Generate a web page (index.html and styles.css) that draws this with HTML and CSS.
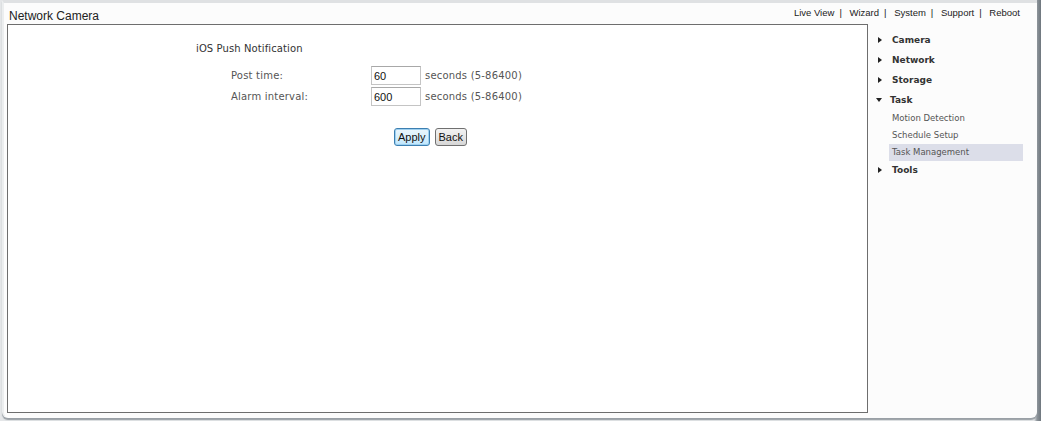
FILE: index.html
```html
<!DOCTYPE html>
<html lang="en">

<head>
  <meta charset="UTF-8" />
  <title>Network Camera</title>
  <link rel="stylesheet" href="styles.css">
</head>

<body>
  <div class="frame">
    <header class="topbar">
      <div class="brand">Network Camera</div>
      <nav class="links">
        <a href="#">Live View</a><span class="sep">|</span>
        <a href="#">Wizard</a><span class="sep">|</span>
        <a href="#">System</a><span class="sep">|</span>
        <a href="#">Support</a><span class="sep">|</span>
        <a href="#">Reboot</a>
      </nav>
    </header>
    <div class="body">
      <main class="panel">
        <div class="title">iOS Push Notification</div>
        <div class="form">
          <label class="label" for="post">Post time:</label>
          <input id="post" class="num" type="text" value="60" />
          <span class="hint">seconds (5-86400)</span>
          <label class="label" for="alarm">Alarm interval:</label>
          <input id="alarm" class="num" type="text" value="600" />
          <span class="hint">seconds (5-86400)</span>
        </div>
        <div class="actions">
          <button class="btn focus">Apply</button>
          <button class="btn">Back</button>
        </div>
      </main>
      <aside class="menu">
        <div class="item"><span class="arrow"></span>Camera</div>
        <div class="item"><span class="arrow"></span>Network</div>
        <div class="item"><span class="arrow"></span>Storage</div>
        <div class="item open"><span class="arrow down"></span>Task</div>
        <div class="sub">Motion Detection</div>
        <div class="sub">Schedule Setup</div>
        <div class="sub active">Task Management</div>
        <div class="item tools"><span class="arrow"></span>Tools</div>
      </aside>
    </div>
  </div>
</body>

</html>
```

FILE: styles.css
```css
:root {
  /* text */
  --text-color: #333;
  --sub-color: #555;
  /* frame */
  --frame-bg: #fcfcfc;
  --edge-color: #dfe1e3;
  /* box */
  --box-border: #6e6e6e;
  --active-bg: #dcdee9;
}

html,
body {
  margin: 0;
  width: 1041px;
  height: 421px;
  overflow: hidden;
}

body {
  background: linear-gradient(to right, #e4e6e8 0, #e4e6e8 1034px, #8d949a 1037px, #6f777e 1041px);
}

.frame {
  box-sizing: border-box;
  width: 1035px;
  height: 418px;
  margin: 0 0 0 2px;
  background-color: var(--frame-bg);
  border-radius: 0 0 6px 6px;
  border-left: 2px solid #eceeef;
  border-top: 3px solid var(--edge-color);
  box-shadow: 0 2px 1px #9aa0a6;
  display: flex;
  flex-direction: column;
}

/* header */
.topbar {
  height: 21px;
  display: flex;
  justify-content: space-between;
  align-items: flex-start;
  font-family: "Liberation Sans", Arial, sans-serif;
  color: #222;
}

.brand {
  font-size: 12px;
  margin: 6px 0 0 5px;
}

.links {
  font-size: 9.5px;
  margin: 4px 17px 0 0;
}

.links a {
  color: #222;
  text-decoration: none;
}

.links .sep {
  margin: 0 5px;
  color: #222;
}

/* body */
.body {
  flex: 1;
  display: flex;
  padding: 0 0 5px 3px;
}

.panel {
  box-sizing: border-box;
  width: 861px;
  border: 1px solid var(--box-border);
  background-color: #fff;
  font-family: "DejaVu Sans", Verdana, sans-serif;
  font-size: 10px;
  color: var(--text-color);
  padding: 18px 0 0 188px;
}

.title {
  line-height: 12px;
  letter-spacing: 0.1px;
}

.form {
  display: grid;
  grid-template-columns: 136px 50px auto;
  column-gap: 4px;
  row-gap: 2px;
  align-items: center;
  margin: 11px 0 0 35px;
  letter-spacing: 0.2px;
}

.label {
  color: var(--sub-color);
}

.num {
  box-sizing: border-box;
  width: 50px;
  height: 19px;
  margin: 0;
  border: 1px solid #c4c4c4;
  border-top-color: #a8a8a8;
  font-family: "Liberation Sans", Arial, sans-serif;
  font-size: 11px;
  padding: 0 2px;
  color: #111;
}

.hint {
  color: var(--sub-color);
}

.actions {
  display: flex;
  gap: 5px;
  margin: 22px 0 0 198px;
}

.btn {
  height: 18px;
  padding: 0 3px;
  font-family: "Liberation Sans", Arial, sans-serif;
  font-size: 11px;
  color: #111;
  border: 1px solid #707070;
  border-radius: 3px;
  background: linear-gradient(#f2f2f2, #e6e6e6 50%, #d6d6d6);
}

.btn.focus {
  border-color: #3c7fb1;
  box-shadow: inset 0 0 0 1px #9ed0f0;
  background: linear-gradient(#eaf6fd, #d9f0fc 50%, #bee6fd);
}

/* menu */
.menu {
  flex: 1;
  padding: 6px 14px 0 6px;
  font-family: "DejaVu Sans", Verdana, sans-serif;
}

.item {
  display: flex;
  align-items: center;
  height: 20px;
  font-size: 9px;
  font-weight: bold;
  color: #333;
}

.item.tools {
  height: 18px;
}

.arrow {
  width: 0;
  height: 0;
  margin: 0 10px 0 4px;
  border-top: 3px solid transparent;
  border-bottom: 3px solid transparent;
  border-left: 4px solid #222;
}

.arrow.down {
  margin: 0 8px 0 2px;
  border-left: 3px solid transparent;
  border-right: 3px solid transparent;
  border-top: 4px solid #222;
  border-bottom: 0;
}

.sub {
  height: 17px;
  line-height: 17px;
  margin-left: 15px;
  padding-left: 3px;
  font-size: 8.5px;
  color: #555;
}

.sub.active {
  background-color: var(--active-bg);
}
```
